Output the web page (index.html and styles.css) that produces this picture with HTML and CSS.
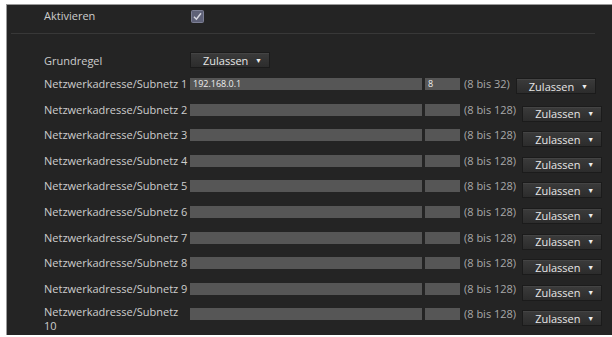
FILE: index.html
```html
<!DOCTYPE html>
<html lang="de">
<head>
  <meta charset="UTF-8" />
  <title>Zugriffsbeschränkung</title>
  <link rel="stylesheet" href="styles.css">
</head>
<body>
  <div class="panel">
    <div class="row row-top">
      <span class="label">Aktivieren</span>
      <span class="check">
        <svg width="13" height="13" viewBox="0 0 13 13">
          <rect x="0.5" y="0.5" width="12" height="12" rx="1" fill="#5e6177" stroke="#7c7f94" />
          <path d="M3 6.8 L5.4 9.2 L10 3.2" fill="none" stroke="#d6d7e0" stroke-width="1.5" />
        </svg>
      </span>
    </div>
    <div class="sep"></div>

    <div class="row row-rule">
      <span class="label">Grundregel</span>
      <span class="select">Zulassen <i class="arrow">▼</i></span>
    </div>

    <div class="row net first">
      <span class="label">Netzwerkadresse/Subnetz 1</span>
      <span class="field addr">192.168.0.1</span>
      <span class="field prefix">8</span>
      <span class="range">(8 bis 32)</span>
      <span class="select">Zulassen <i class="arrow">▼</i></span>
    </div>
    <div class="row net">
      <span class="label">Netzwerkadresse/Subnetz 2</span>
      <span class="field addr"></span>
      <span class="field prefix"></span>
      <span class="range">(8 bis 128)</span>
      <span class="select">Zulassen <i class="arrow">▼</i></span>
    </div>
    <div class="row net">
      <span class="label">Netzwerkadresse/Subnetz 3</span>
      <span class="field addr"></span>
      <span class="field prefix"></span>
      <span class="range">(8 bis 128)</span>
      <span class="select">Zulassen <i class="arrow">▼</i></span>
    </div>
    <div class="row net">
      <span class="label">Netzwerkadresse/Subnetz 4</span>
      <span class="field addr"></span>
      <span class="field prefix"></span>
      <span class="range">(8 bis 128)</span>
      <span class="select">Zulassen <i class="arrow">▼</i></span>
    </div>
    <div class="row net">
      <span class="label">Netzwerkadresse/Subnetz 5</span>
      <span class="field addr"></span>
      <span class="field prefix"></span>
      <span class="range">(8 bis 128)</span>
      <span class="select">Zulassen <i class="arrow">▼</i></span>
    </div>
    <div class="row net">
      <span class="label">Netzwerkadresse/Subnetz 6</span>
      <span class="field addr"></span>
      <span class="field prefix"></span>
      <span class="range">(8 bis 128)</span>
      <span class="select">Zulassen <i class="arrow">▼</i></span>
    </div>
    <div class="row net">
      <span class="label">Netzwerkadresse/Subnetz 7</span>
      <span class="field addr"></span>
      <span class="field prefix"></span>
      <span class="range">(8 bis 128)</span>
      <span class="select">Zulassen <i class="arrow">▼</i></span>
    </div>
    <div class="row net">
      <span class="label">Netzwerkadresse/Subnetz 8</span>
      <span class="field addr"></span>
      <span class="field prefix"></span>
      <span class="range">(8 bis 128)</span>
      <span class="select">Zulassen <i class="arrow">▼</i></span>
    </div>
    <div class="row net">
      <span class="label">Netzwerkadresse/Subnetz 9</span>
      <span class="field addr"></span>
      <span class="field prefix"></span>
      <span class="range">(8 bis 128)</span>
      <span class="select">Zulassen <i class="arrow">▼</i></span>
    </div>
    <div class="row net">
      <span class="label wrap">Netzwerkadresse/Subnetz 10</span>
      <span class="field addr"></span>
      <span class="field prefix"></span>
      <span class="range">(8 bis 128)</span>
      <span class="select">Zulassen <i class="arrow">▼</i></span>
    </div>
  </div>
</body>
</html>
```

FILE: styles.css
```css
:root {
  --panel: #242424;
  --edge: #9a9a9a;
  --text: #cdcdcd;
  --muted: #a8a8a8;
  --field: #565656;
}
body {
  margin: 0;
  background: #fff;
  font-family: "Open Sans", "Liberation Sans", sans-serif;
  font-size: 11px;
  color: var(--text);
}
.panel {
  margin: 4px 0 0 6px;
  height: 331px;
  box-sizing: border-box;
  overflow: hidden;
  background: var(--panel);
  border-top: 1px solid var(--edge);
  border-left: 1px solid var(--edge);
}
.row {
  display: flex;
  align-items: flex-start;
  padding-left: 37px;
}
.label {
  width: 146px;
  flex: none;
  line-height: 12px;
}
.row-top {
  height: 20px;
  padding-top: 1px;
  align-items: center;
}
.check { display: flex; margin-left: 1px; }
.sep {
  height: 1px;
  margin: 7px 17px 0 4px;
  background: #383838;
}
.row-rule {
  margin-top: 18px;
  height: 16px;
  align-items: center;
}
.row-rule .label { margin-top: 1px; }
.net {
  height: 25.6px;
}
.net.first { margin-top: 10px; }
.field {
  flex: none;
  height: 12px;
  background: var(--field);
  color: #eee;
  font-size: 9px;
  line-height: 12px;
  padding-left: 3px;
  box-sizing: border-box;
}
.addr { width: 232px; }
.prefix { width: 35px; margin-left: 3px; }
.range {
  margin-left: 4px;
  color: var(--muted);
  line-height: 12px;
}
.select {
  flex: none;
  display: flex;
  align-items: center;
  width: 80px;
  height: 16px;
  box-sizing: border-box;
  padding-left: 12px;
  background: linear-gradient(#3b3b3b, #2c2c2c);
  border: 1px solid #1b1b1b;
  box-shadow: inset 0 1px 0 #444;
  color: #e6e6e6;
  font-size: 11px;
}
.net .select { margin: 2px 0 0 6px; }
.net.first .select { margin-top: 0; }
.arrow {
  font-style: normal;
  font-size: 7px;
  margin-left: auto;
  margin-right: 7px;
  color: #eee;
}
.label.wrap {
  margin-top: -3px;
  line-height: 14px;
}
```
